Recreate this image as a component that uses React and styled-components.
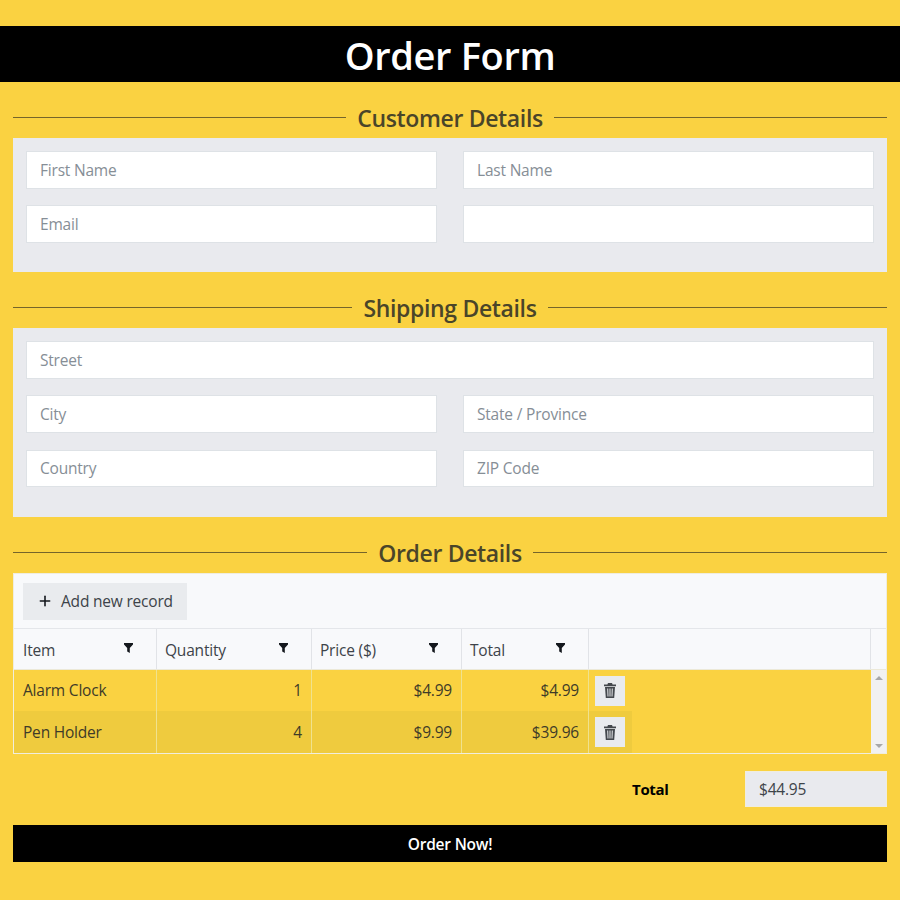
import styled, { createGlobalStyle } from "styled-components";
import { Plus } from "lucide-react";

const GlobalStyle = createGlobalStyle`
  html, body {
    margin: 0;
    padding: 0;
    background: #fad241;
    font-family: "Open Sans", "Noto Sans", sans-serif;
  }
  * { box-sizing: border-box; }
`;

const COLUMNS = "143px 155px 150px 127px 43px";

const Page = styled.div`
  width: 900px;
  height: 900px;
  padding-top: 26px;
  background: #fad241;
  overflow: hidden;
`;

const TitleBar = styled.h1`
  margin: 0;
  height: 56px;
  background: #000;
  color: #fff;
  font-size: 38px;
  font-weight: 600;
  line-height: 59px;
  text-align: center;
  letter-spacing: -0.35px;
`;

const Content = styled.div`
  padding: 0 13px;
`;

const SectionTitle = styled.div`
  display: flex;
  align-items: center;
  gap: 11px;
  height: 38px;
  margin-top: 18px;
  padding-bottom: 2px;
  color: #4a4529;
  font-size: 23px;
  font-weight: 600;
  letter-spacing: -0.35px;
  white-space: nowrap;

  &::before, &::after {
    content: "";
    flex: 1;
    height: 1px;
    background: #75652a;
    margin-top: -1px;
  }
`;

const Panel = styled.div`
  display: grid;
  grid-template-columns: 411px 411px;
  column-gap: 26px;
  row-gap: 16.75px;
  padding: 13px 13px ${props => props.$bottom}px;
  background: #e9eaee;
`;

const Field = styled.input`
  display: block;
  width: 100%;
  height: 37.5px;
  padding: 0 13px;
  border: 1px solid #dee2e6;
  border-radius: 0;
  background: #fff;
  color: #343a40;
  font-family: inherit;
  font-size: 15.5px;
  letter-spacing: -0.2px;
  grid-column: ${props => (props.$wide ? "1 / -1" : "auto")};

  &::placeholder { color: #868e96; opacity: 1; }
`;

const Grid = styled.div`
  border: 1px solid #f0edde;
  color: #3f3b28;
  font-size: 15.5px;
  letter-spacing: -0.2px;
`;

const Toolbar = styled.div`
  height: 55px;
  padding: 9px;
  background: #f8f9fb;
  border-bottom: 1px solid #e4e6ea;
`;

const AddButton = styled.button`
  display: flex;
  align-items: center;
  gap: 8px;
  width: 164px;
  height: 37px;
  padding: 0 0 2px 14px;
  border: 0;
  background: #e9ebee;
  color: #3d4349;
  font-family: inherit;
  font-size: 15.5px;
  letter-spacing: -0.2px;
`;

const HeadRow = styled.div`
  display: grid;
  grid-template-columns: 143px 155px 150px 127px 1fr 15px;
  height: 41px;
  background: #f8f9fb;
  border-bottom: 1px solid #ece9d8;
`;

const HeadCell = styled.div`
  display: flex;
  justify-content: space-between;
  padding: 11px 23px 0 ${props => (props.$first ? 9 : 8)}px;
  border-right: 1px solid #e1e3e7;
  color: #3d4349;
  line-height: 20px;

  &:last-child { border-right: 0; }
`;

const FilterIcon = styled.svg`
  width: 9px;
  height: 10px;
  margin-top: 3px;
  fill: #14181d;
`;

const TrashIcon = styled.svg`
  width: 12px;
  height: 15px;
  fill: #44484d;
`;

const Body = styled.div`
  display: flex;
  height: 83px;
`;

const Rows = styled.div`
  flex: 1;
`;

const Row = styled.div`
  display: grid;
  grid-template-columns: ${COLUMNS};
  width: fit-content;
  height: ${props => props.height}px;
  background: ${props => (props.$alt ? "#efcb3e" : "transparent")};
`;

const Cell = styled.div`
  padding-right: 9px;
  padding-left: 9px;
  border-right: 1px solid #f0e28e;
  line-height: ${props => props.height}px;
  text-align: ${props => (props.$num ? "right" : "left")};
`;

const CommandCell = styled.div`
  display: flex;
  align-items: center;
  padding-left: 6px;
`;

const DeleteButton = styled.button`
  display: flex;
  align-items: center;
  justify-content: center;
  width: 30px;
  height: 30px;
  padding: 0;
  border: 0;
  background: #e9ebee;
`;

const Scrollbar = styled.div`
  display: flex;
  flex-direction: column;
  justify-content: space-between;
  align-items: center;
  width: 15px;
  padding: 6px 0 5px;
  background: #f1f1f1;
`;

const Arrow = styled.div`
  width: 0;
  height: 0;
  border-left: 4px solid transparent;
  border-right: 4px solid transparent;
  border-${props => (props.$up ? "bottom" : "top")}: 4px solid #a8a8a8;
`;

const Summary = styled.div`
  display: flex;
  align-items: center;
  justify-content: flex-end;
  height: 36px;
  margin-top: 17px;
`;

const SummaryLabel = styled.div`
  width: 113px;
  color: #000;
  font-size: 15px;
  font-weight: 700;
  letter-spacing: -0.3px;
`;

const SummaryValue = styled.div`
  width: 142px;
  height: 36px;
  padding-left: 13px;
  border: 1px solid #f0edde;
  background: #e9eaee;
  color: #3d4349;
  font-size: 15.5px;
  letter-spacing: -0.2px;
  line-height: 35px;
`;

const OrderButton = styled.button`
  display: block;
  width: 100%;
  height: 37px;
  margin-top: 18px;
  border: 0;
  background: #000;
  color: #fff;
  font-family: inherit;
  font-size: 15.5px;
  font-weight: 600;
  letter-spacing: -0.2px;
`;

const Filter = () => (
  <FilterIcon viewBox="0 0 9 10">
    <path d="M0 0h9v1.6L5.8 5v5L3.2 8.6V5L0 1.6z" />
  </FilterIcon>
);

const Trash = () => (
  <TrashIcon viewBox="0 0 12 15">
    <path d="M4 0h4l.6 1.6H12v1.6H0V1.600h3.400zM1 4h10l-.8 11H1.800zM3.200 5.500l.3 8h1l-.3-8zM5.500 5.500v8h1v-8zM7.800 5.500l-.3 8h1l.3-8z" fillRule="evenodd" />
  </TrashIcon>
);

const heads = ["Item", "Quantity", "Price ($)", "Total"];

const records = [
  { item: "Alarm Clock", qty: 1, price: "$4.99", total: "$4.99", height: 41 },
  { item: "Pen Holder", qty: 4, price: "$9.99", total: "$39.96", height: 42, alt: true },
];

export default function App() {
  return (
    <Page>
      <GlobalStyle />
      <TitleBar>Order Form</TitleBar>
      <Content>
        <SectionTitle>Customer Details</SectionTitle>
        <Panel $bottom={29.25}>
          <Field placeholder="First Name" />
          <Field placeholder="Last Name" />
          <Field placeholder="Email" />
          <Field />
        </Panel>

        <SectionTitle>Shipping Details</SectionTitle>
        <Panel $bottom={30}>
          <Field $wide placeholder="Street" />
          <Field placeholder="City" />
          <Field placeholder="State / Province" />
          <Field placeholder="Country" />
          <Field placeholder="ZIP Code" />
        </Panel>

        <SectionTitle>Order Details</SectionTitle>
        <Grid>
          <Toolbar>
            <AddButton>
              <Plus size={16} strokeWidth={2.4} color="#14181d" />
              Add new record
            </AddButton>
          </Toolbar>
          <HeadRow>
            {heads.map((h, i) => (
              <HeadCell key={h} $first={i === 0}>
                {h}
                <Filter />
              </HeadCell>
            ))}
            <HeadCell />
            <HeadCell />
          </HeadRow>
          <Body>
            <Rows>
              {records.map(r => (
                <Row key={r.item} height={r.height} $alt={r.alt}>
                  <Cell height={r.height}>{r.item}</Cell>
                  <Cell height={r.height} $num>{r.qty}</Cell>
                  <Cell height={r.height} $num>{r.price}</Cell>
                  <Cell height={r.height} $num>{r.total}</Cell>
                  <CommandCell>
                    <DeleteButton aria-label="Delete">
                      <Trash />
                    </DeleteButton>
                  </CommandCell>
                </Row>
              ))}
            </Rows>
            <Scrollbar>
              <Arrow $up />
              <Arrow />
            </Scrollbar>
          </Body>
        </Grid>
        <Summary>
          <SummaryLabel>Total</SummaryLabel>
          <SummaryValue>$44.95</SummaryValue>
        </Summary>
        <OrderButton>Order Now!</OrderButton>
      </Content>
    </Page>
  );
}
